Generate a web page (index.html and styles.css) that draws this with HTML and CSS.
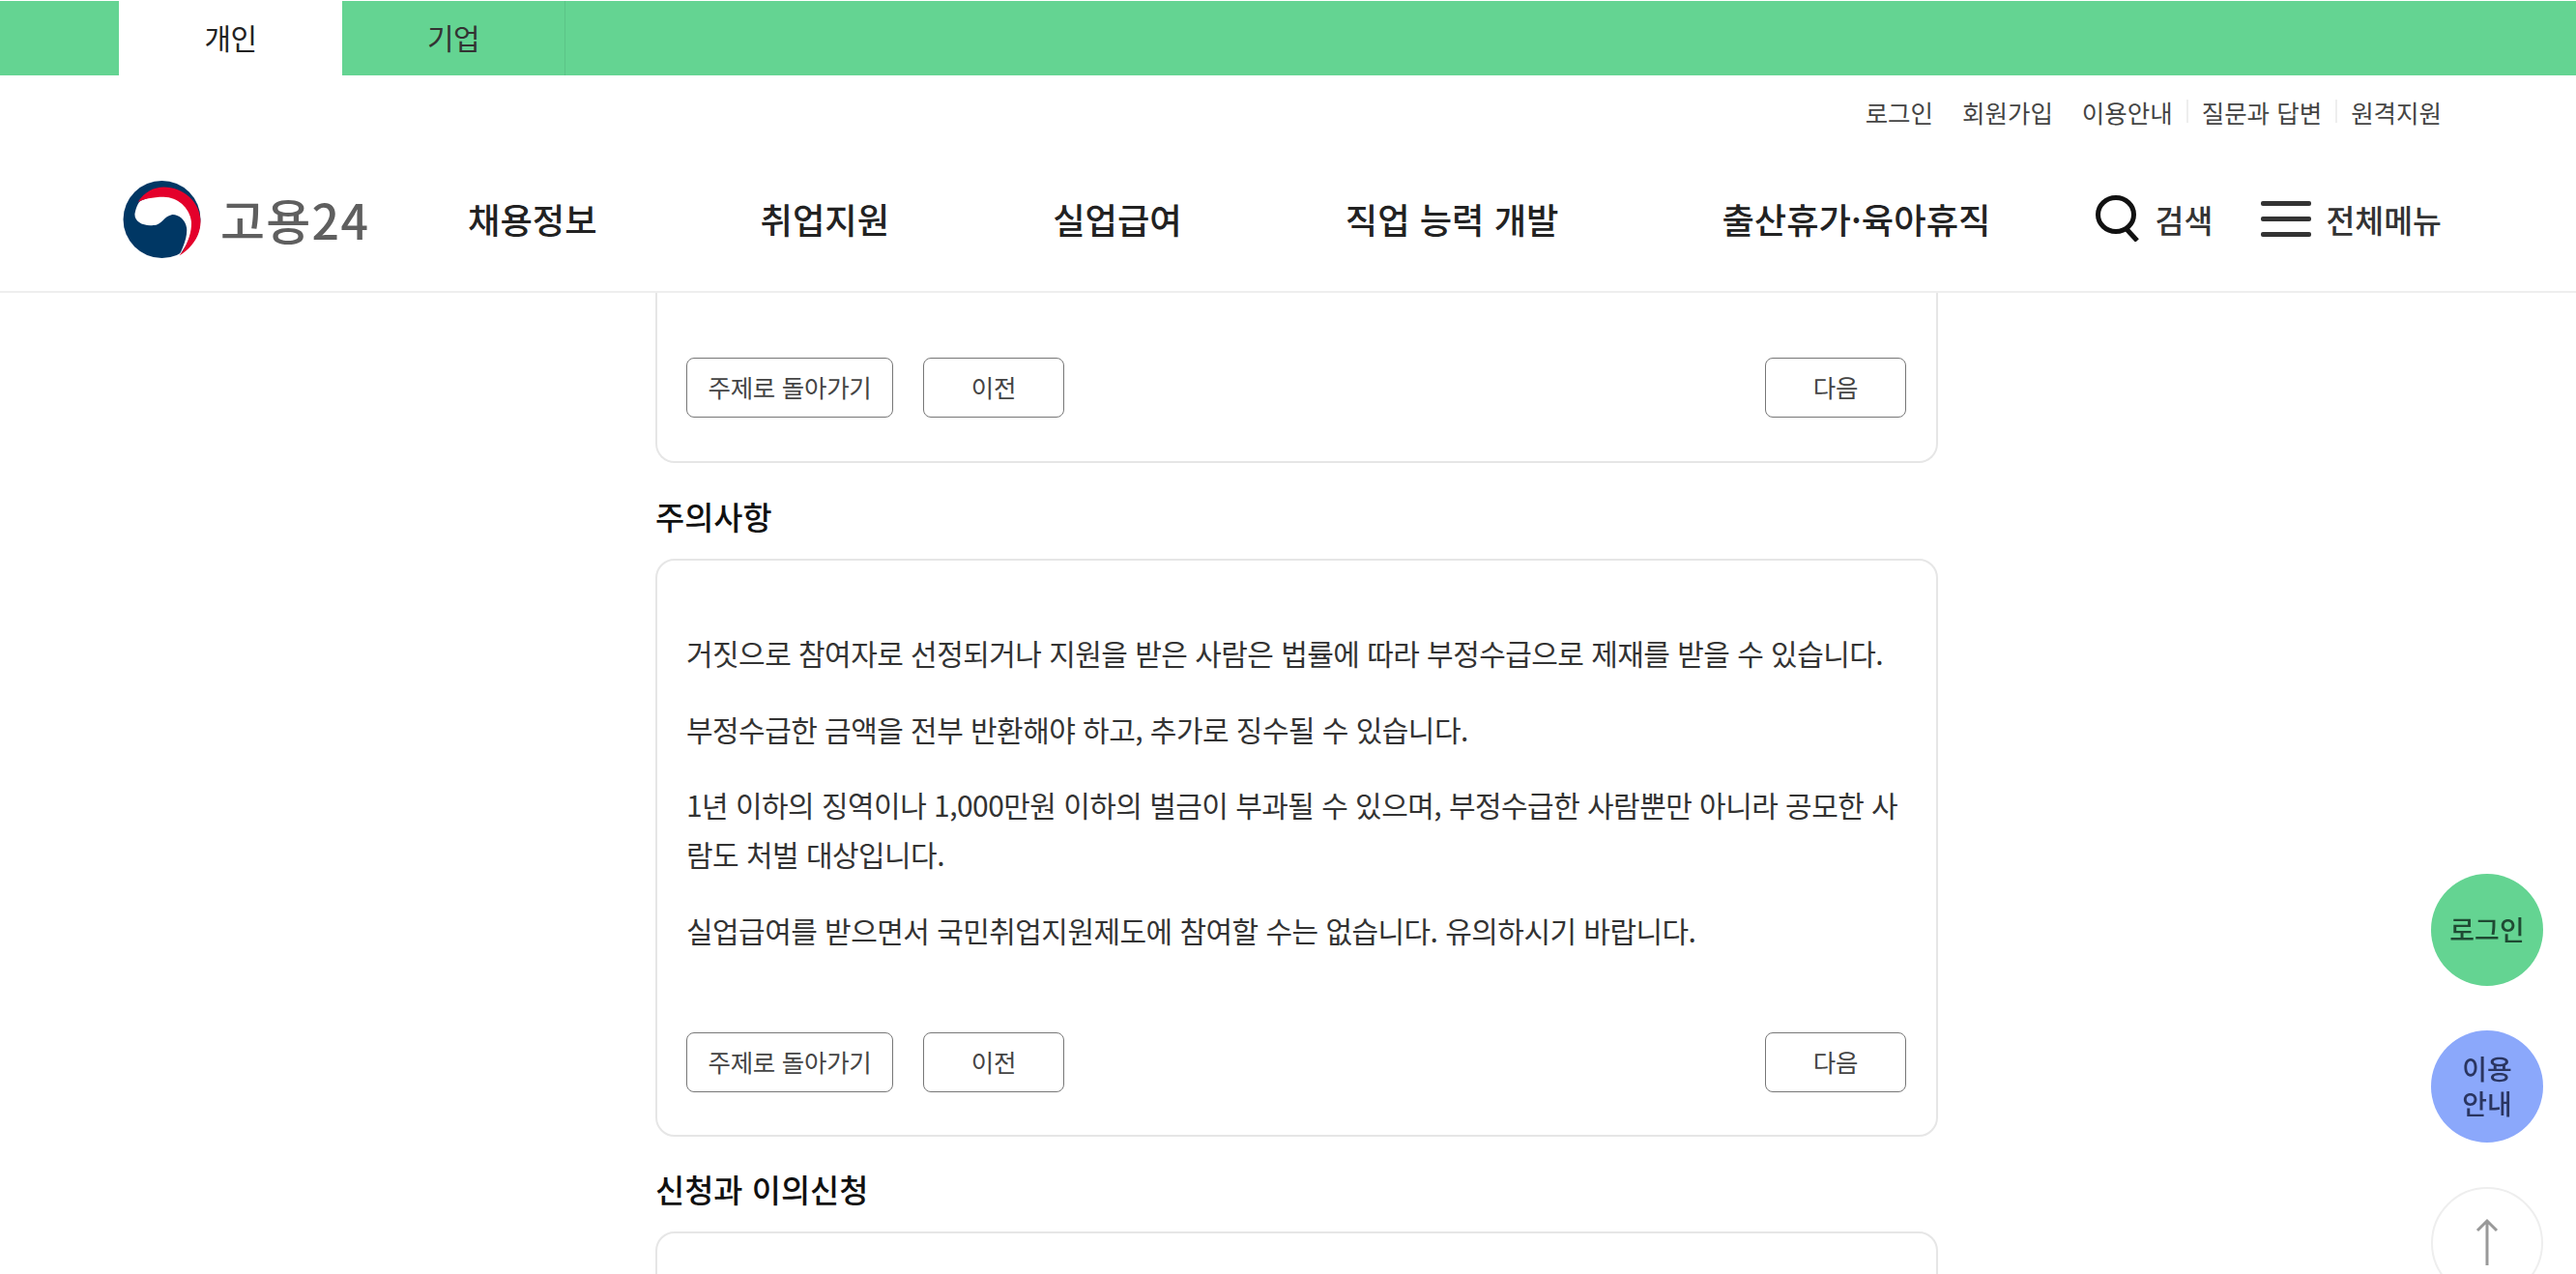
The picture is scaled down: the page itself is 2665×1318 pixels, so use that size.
FILE: index.html
```html
<!DOCTYPE html>
<html lang="ko">
<head>
    <meta charset="UTF-8">
    <meta name="viewport" content="width=device-width, initial-scale=1.0">
    <title>고용24</title>
    <link rel="stylesheet" href="styles.css">
</head>
<body>
    <div class="site-tabs">
        <a class="site-tab active">개인</a>
        <a class="site-tab">기업</a>
    </div>

    <header class="header">
        <div class="util-links">
            <a>로그인</a>
            <a>회원가입</a>
            <a>이용안내</a>
            <span class="util-sep"></span>
            <a>질문과 답변</a>
            <span class="util-sep"></span>
            <a>원격지원</a>
        </div>
        <div class="main-bar">
            <a class="logo">
                <svg class="logo-mark" viewBox="-100 -100 200 200">
                    <circle r="100" fill="#003764"/>
                    <path fill="#fff" d="M-70,-15 C-66,-35 -60,-44 -55,-48 C-30,-60 -10,-60 5,-60 C40,-60 74,-30 78,5 C80,30 68,65 45,92 C60,62 66,40 64,22 C60,-2 40,-14 25,-12 C5,-8 0,15 -22,15 C-50,18 -72,5 -70,-15Z"/>
                    <path fill="#e4002b" d="M-62,-45 C-45,-72 -20,-84 5,-84 C55,-84 100,-45 100,5 C100,45 75,75 45,94 C68,65 78,30 76,5 C72,-30 40,-58 5,-58 C-25,-58 -48,-52 -62,-45Z"/>
                </svg>
                <span class="logo-text">고용24</span>
            </a>
            <nav class="gnb">
                <a>채용정보</a>
                <a>취업지원</a>
                <a>실업급여</a>
                <a>직업 능력 개발</a>
                <a>출산휴가·육아휴직</a>
            </nav>
            <div class="header-tools">
                <a class="tool tool-search">
                    <svg class="icon-search" viewBox="0 0 46 48">
                        <ellipse cx="21" cy="20" rx="18.5" ry="17.5" fill="none" stroke="#111" stroke-width="5"/>
                        <path d="M32 35 L43 47" fill="none" stroke="#111" stroke-width="5"/>
                    </svg>
                    검색
                </a>
                <a class="tool tool-menu">
                    <span class="icon-menu"><i></i><i></i><i></i></span>
                    전체메뉴
                </a>
            </div>
        </div>
    </header>

    <main class="content">
        <div class="card card-cut">
            <div class="card-btns">
                <a class="btn btn-wide">주제로 돌아가기</a>
                <a class="btn">이전</a>
                <a class="btn btn-next">다음</a>
            </div>
        </div>

        <h2 class="section-title">주의사항</h2>
        <div class="card">
            <div class="card-body">
                <p>거짓으로 참여자로 선정되거나 지원을 받은 사람은 법률에 따라 부정수급으로 제재를 받을 수 있습니다.</p>
                <p>부정수급한 금액을 전부 반환해야 하고, 추가로 징수될 수 있습니다.</p>
                <p>1년 이하의 징역이나 1,000만원 이하의 벌금이 부과될 수 있으며, 부정수급한 사람뿐만 아니라 공모한 사람도 처벌 대상입니다.</p>
                <p>실업급여를 받으면서 국민취업지원제도에 참여할 수는 없습니다. 유의하시기 바랍니다.</p>
            </div>
            <div class="card-btns">
                <a class="btn btn-wide">주제로 돌아가기</a>
                <a class="btn">이전</a>
                <a class="btn btn-next">다음</a>
            </div>
        </div>

        <h2 class="section-title">신청과 이의신청</h2>
        <div class="card card-empty"></div>
    </main>

    <div class="side-btns">
        <a class="side-btn side-login">로그인</a>
        <a class="side-btn side-guide">이용<br>안내</a>
        <a class="side-btn side-top">
            <svg class="icon-top" viewBox="0 0 24 50">
                <path d="M12 49 V3 M2 13 L12 3 L22 13" fill="none" stroke="#999" stroke-width="3"/>
            </svg>
        </a>
    </div>
</body>
</html>
```

FILE: styles.css
```css
* {
    box-sizing: border-box;
}

html, body {
    height: 100%;
    overflow: hidden;
}

body {
    margin: 0;
    font-family: "Noto Sans CJK KR", "Noto Sans", sans-serif;
    color: #333;
    background-color: #fff;
}

a {
    color: inherit;
    text-decoration: none;
}

.site-tabs {
    display: flex;
    height: 77px;
    margin-top: 1px;
    padding-left: 123px;
    background-color: #64d492;
}

.site-tab {
    display: flex;
    align-items: center;
    justify-content: center;
    width: 231px;
    padding-bottom: 4px;
    font-size: 30px;
    letter-spacing: -0.5px;
    border-right: 1px solid #5cc487;
}

.site-tab.active {
    background-color: #fff;
    border-right: none;
    color: #222;
}

.header {
    height: 225px;
    border-bottom: 2px solid #eee;
}

.util-links {
    display: flex;
    align-items: center;
    justify-content: flex-end;
    height: 74px;
    padding-right: 139px;
    font-size: 25.5px;
    color: #444;
}

.util-links a {
    margin-left: 30px;
}

.util-sep {
    width: 2px;
    height: 24px;
    margin-left: 14px;
    margin-right: -16px;
    background-color: #eee;
}

.main-bar {
    display: flex;
    align-items: center;
    height: 72px;
    margin-top: 38px;
    padding-left: 127px;
    padding-right: 139px;
}

.logo {
    display: flex;
    align-items: center;
    width: 357px;
}

.logo-mark {
    width: 81px;
    height: 80px;
    margin-top: 2px;
    flex: none;
}

.logo-text {
    margin-left: 20px;
    font-size: 50px;
    font-weight: 500;
    letter-spacing: 1.3px;
    color: #5f5f5f;
    line-height: 1;
}

.gnb {
    display: flex;
    gap: 169px;
    font-size: 36.3px;
    font-weight: 500;
    color: #222;
}

.header-tools {
    display: flex;
    align-items: center;
    margin-left: auto;
    font-size: 32.5px;
    font-weight: 500;
    color: #333;
}

.tool {
    display: flex;
    align-items: center;
}

.icon-search {
    width: 46px;
    height: 48px;
    margin-right: 16px;
}

.tool-menu {
    margin-left: 50px;
}

.icon-menu {
    display: flex;
    flex-direction: column;
    gap: 11px;
    width: 52px;
    margin-right: 15px;
}

.icon-menu i {
    display: block;
    height: 5px;
    border-radius: 2px;
    background-color: #333;
}

.content {
    width: 1327px;
    margin-left: 678px;
}

.card {
    padding: 0 31px 44px 30px;
    background-color: #fff;
    border: 2px solid #e6e6e6;
    border-radius: 20px;
}

.card-cut {
    padding-top: 67px;
    padding-bottom: 45px;
    border-top: none;
    border-top-left-radius: 0;
    border-top-right-radius: 0;
}

.card-empty {
    height: 200px;
}

.section-title {
    margin: 31px 0 21px;
    font-size: 32.8px;
    font-weight: 500;
    line-height: 46px;
    color: #111;
}

.card-cut + .section-title {
    margin-top: 32px;
}

.card-body {
    padding-top: 70px;
    padding-bottom: 80px;
    font-size: 30px;
    letter-spacing: -0.55px;
    line-height: 51px;
    color: #333;
}

.card-body p {
    margin: 0 0 27.5px;
}

.card-body p:last-child {
    margin-bottom: 0;
}

.card-btns {
    display: flex;
    gap: 31px;
}

.btn {
    display: flex;
    align-items: center;
    justify-content: center;
    width: 146px;
    height: 62px;
    padding-bottom: 3px;
    font-size: 25.5px;
    letter-spacing: -0.3px;
    color: #444;
    background-color: #fff;
    border: 1.5px solid #777;
    border-radius: 8px;
}

.btn-wide {
    width: 214px;
}

.btn-next {
    margin-left: auto;
}

.side-btns {
    position: fixed;
    top: 904px;
    right: 34px;
    display: flex;
    flex-direction: column;
    gap: 46px;
}

.side-btn {
    display: flex;
    align-items: center;
    justify-content: center;
    width: 116px;
    height: 116px;
    padding-bottom: 2px;
    border-radius: 50%;
    font-size: 28px;
    font-weight: 500;
    line-height: 36px;
    text-align: center;
}

.side-login {
    background-color: #64d492;
    color: #1f4a33;
}

.side-guide {
    background-color: #8ba8fb;
    color: #2a3560;
}

.side-top {
    background-color: #fff;
    border: 2px solid #eee;
}

.icon-top {
    width: 24px;
    height: 50px;
}
```
